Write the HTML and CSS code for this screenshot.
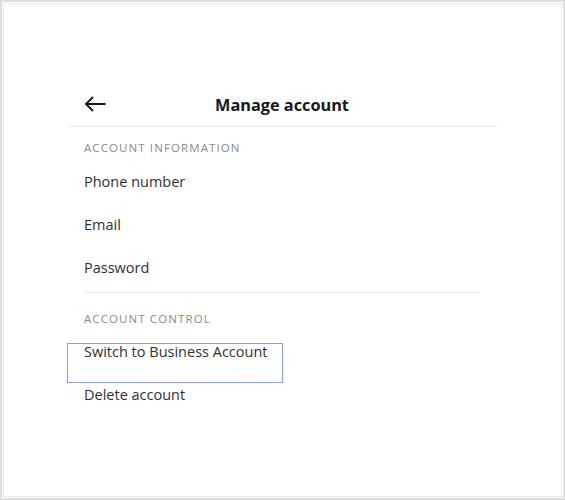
FILE: index.html
```html
<!DOCTYPE html>
<html lang="en">
<head>
<meta charset="utf-8">
<title>Manage account</title>
<link rel="stylesheet" href="styles.css">
</head>
<body>
<div class="frame">
  <div class="inner">
    <div class="panel">
      <div class="header">
        <span class="back">
          <svg width="22" height="16" viewBox="0 0 22 16" fill="none" stroke="#161823" stroke-width="1.8" stroke-linecap="round" stroke-linejoin="round">
            <path d="M21 8H2"/>
            <path d="M8.5 1.5L2 8l6.5 6.5"/>
          </svg>
        </span>
        <h1 class="title">Manage account</h1>
      </div>
      <div class="label label-first">ACCOUNT INFORMATION</div>
      <div class="item">Phone number</div>
      <div class="item">Email</div>
      <div class="item">Password</div>
      <div class="divider"></div>
      <div class="label label-second">ACCOUNT CONTROL</div>
      <div class="focus-box">Switch to Business Account</div>
      <div class="item-last">Delete account</div>
    </div>
  </div>
</div>
</body>
</html>
```
FILE: styles.css
```css
html, body {
  margin: 0;
  padding: 0;
  background: #ffffff;
}
body {
  font-family: "Open Sans", "Liberation Sans", sans-serif;
  color: #2f3036;
}
.frame {
  box-sizing: border-box;
  width: 565px;
  height: 500px;
  border: 2px solid #dedede;
  padding: 1px;
  background: #fff;
}
.inner {
  box-sizing: border-box;
  height: 100%;
  border: 1px solid #ebebeb;
  padding-top: 79px;
}
.panel {
  margin-left: 63px;
  width: 430px;
}
.header {
  position: relative;
  height: 43px;
  border-bottom: 1px solid #ececec;
  display: flex;
  align-items: center;
  justify-content: center;
}
.back {
  position: absolute;
  left: 17px;
  top: 13px;
  display: flex;
}
.title {
  margin: 0;
  font-size: 16.3px;
  font-weight: 700;
  color: #161823;
  line-height: 20px;
}
.label {
  font-size: 11.5px;
  line-height: 16px;
  color: #8a8b91;
  padding-left: 17px;
  letter-spacing: 1.1px;
}
.label-first {
  margin-top: 13px;
  margin-bottom: 4px;
}
.item {
  padding-left: 17px;
  font-size: 14.5px;
  line-height: 43px;
  height: 43px;
}
.divider {
  margin: 3px 17px 0 17px;
  height: 1px;
  background: #ececec;
}
.label-second {
  margin-top: 18px;
}
.focus-box {
  box-sizing: border-box;
  margin-top: 16px;
  width: 216px;
  height: 40px;
  border: 1px solid #8c9fe6;
  padding: 0 0 0 16px;
  font-size: 14.5px;
  line-height: 15px;
}
.item-last {
  padding-left: 17px;
  font-size: 14.5px;
  line-height: 20px;
  margin-top: 2px;
}
```
